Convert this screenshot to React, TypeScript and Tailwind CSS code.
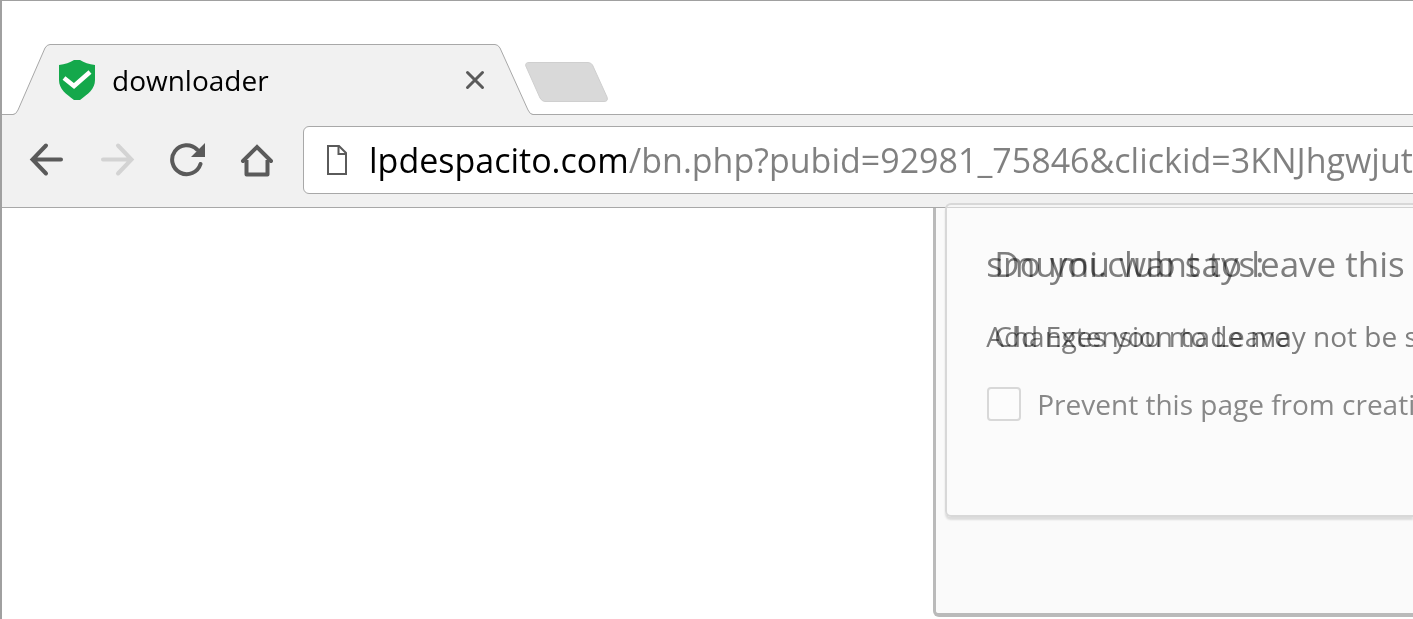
import type { ReactNode } from 'react'

const URL_TEXT = 'lpdespacito.com/bn.php?pubid=92981_75846&clickid=3KNJhgwjutc'

function NavButton({ label, disabled, children }: { label: string; disabled?: boolean; children: ReactNode }) {
  return (
    <button
      type="button"
      aria-label={label}
      disabled={disabled}
      className="h-9 w-9 shrink-0 text-[#5a5a5a] disabled:text-[#d3d3d3]"
    >
      <svg viewBox="0 0 36 36" className="h-9 w-9" fill="none" stroke="currentColor" strokeWidth="4">
        {children}
      </svg>
    </button>
  )
}

function ShieldIcon() {
  return (
    <svg viewBox="0 0 36 40" className="h-10 w-9 shrink-0" aria-hidden="true">
      <path d="M15 0H21Q27 4 36 5V20C36 29 29 34 21 40H15C7 34 0 29 0 20V5Q9 4 15 0Z" fill="#14a84b" />
      <path d="M5 18L15 26L31 12" fill="none" stroke="#fff" strokeWidth="4.5" />
    </svg>
  )
}

function TabStrip() {
  return (
    <div className="flex h-[114px] items-end border-b border-[#a8a8a8] bg-white">
      <div className="relative -mb-px flex h-[71px] w-[531px] shrink-0 items-center pl-[57px] pr-[46px]">
        {/* Slanted tab outline */}
        <svg viewBox="0 0 531 71" className="absolute inset-0 h-full w-full" aria-hidden="true">
          <path
            d="M0 70.5H11Q14 70.5 16 66L43 4Q45 .5 48 .5H493Q496 .5 498 4L526 66Q528 70.5 531 70.5V71H0Z"
            fill="#f1f1f1"
          />
          <path
            d="M0 70.5H11Q14 70.5 16 66L43 4Q45 .5 48 .5H493Q496 .5 498 4L526 66Q528 70.5 531 70.5"
            fill="none"
            stroke="#a8a8a8"
          />
        </svg>
        <div className="relative flex flex-1 items-center">
          <ShieldIcon />
          <span className="ml-[17px] flex-1 text-[28px] leading-9 text-black">downloader</span>
          <button type="button" aria-label="Close tab" className="h-6 w-6 text-[#5a5a5a]">
            <svg viewBox="0 0 24 24" fill="none" stroke="currentColor" strokeWidth="3" strokeLinecap="round">
              <path d="M4.500 4.500L19.500 19.500M19.500 4.500L4.500 19.500" />
            </svg>
          </button>
        </div>
      </div>
      <button type="button" aria-label="New tab" className="-ml-2 mb-3 h-10 w-[83px] shrink-0">
        <svg viewBox="0 0 83 40" className="h-10 w-[83px]">
          <path
            d="M4 .5H63Q66 .5 67.5 3L82 35Q83.500 39.500 79 39.500H20Q17 39.500 15 36L.8 4Q0 .5 4 .5Z"
            fill="#d9d9d9"
            stroke="#cfcfcf"
          />
        </svg>
      </button>
    </div>
  )
}

function Toolbar() {
  return (
    <div className="flex h-[93px] items-center gap-[34px] border-b border-[#a8a8a8] bg-[#f1f1f1] pb-[13px] pl-[27px] pt-[11px]">
      <NavButton label="Back">
        <path d="M32 17.500H4M17 3.500L3.500 17.500L17 31.500" strokeLinecap="round" />
      </NavButton>
      <NavButton label="Forward" disabled>
        <path d="M4 17.500H32M19 3.500L32.500 17.500L19 31.500" strokeLinecap="round" />
      </NavButton>
      <NavButton label="Reload">
        <path d="M28 7.500A14.500 14.500 0 1 0 31.500 22" strokeLinecap="round" />
        <path d="M36 1V15H22Z" fill="currentColor" stroke="none" />
      </NavButton>
      <NavButton label="Home">
        <path d="M4 19L18 5L32 19" strokeLinecap="round" />
        <path d="M7.500 18V32.500H28.500V18" strokeLinejoin="round" />
      </NavButton>
      <div className="-ml-[6px] -mr-8 flex h-[68px] flex-1 items-center rounded-md border border-[#a8a8a8] bg-white pl-[23px]">
        <svg viewBox="0 0 20 30" className="h-[30px] w-5 shrink-0" fill="none" stroke="#5a5a5a" strokeWidth="2" aria-hidden="true">
          <path d="M1 1H12L19 8V29H1Z" />
          <path d="M11.500 1V9H19" />
        </svg>
        <input
          type="text"
          aria-label="Address"
          defaultValue={URL_TEXT}
          className="ml-[22px] h-12 min-w-0 flex-1 bg-[linear-gradient(to_right,#000_257px,#808080_257px)] bg-clip-text text-[34px] text-transparent caret-black outline-none"
        />
      </div>
    </div>
  )
}

function Dialogs() {
  return (
    <div className="ml-auto h-[409px] w-[34%] rounded-bl-md border-b-4 border-l-[3px] border-[#bababa] bg-[#fafafa]">
      <div className="relative -top-[5px] ml-[9px] h-[314px] rounded-l-md border-2 border-r-0 border-[#d8d8d8] bg-[#fcfcfc]/50 pl-[39px] pt-[35px] shadow-[0_3px_2px_#dcdcdc]">
        {/* Two prompts fading through each other share the same cells */}
        <div className="grid whitespace-nowrap text-[#808080]">
          <h2 className="col-start-1 row-start-1 text-[35px] leading-12 mix-blend-multiply">smumi.club says:</h2>
          <h2 className="col-start-1 row-start-1 pl-2 text-[35px] leading-12 mix-blend-multiply">
            Do you want to leave this site?
          </h2>
          <p className="col-start-1 row-start-2 mt-7 text-[28px] leading-10 mix-blend-multiply">Add Extension to Leave</p>
          <p className="col-start-1 row-start-2 mt-7 pl-2 text-[28px] leading-10 mix-blend-multiply">
            Changes you made may not be saved.
          </p>
        </div>
        <label className="mt-7 flex items-center gap-4 whitespace-nowrap text-[28px] leading-10 text-[#888888]">
          <input
            type="checkbox"
            className="ml-px h-[34px] w-[34px] shrink-0 appearance-none rounded-sm border-2 border-[#d8d8d8] bg-[#fcfcfc]"
          />
          Prevent this page from creating additional dialogs.
        </label>
      </div>
    </div>
  )
}

export default function App() {
  return (
    <div className="min-h-screen overflow-hidden border-l-2 border-t border-[#a0a0a0] bg-white font-['Open_Sans','Noto_Sans',sans-serif]">
      <TabStrip />
      <Toolbar />
      <main>
        <Dialogs />
      </main>
    </div>
  )
}
